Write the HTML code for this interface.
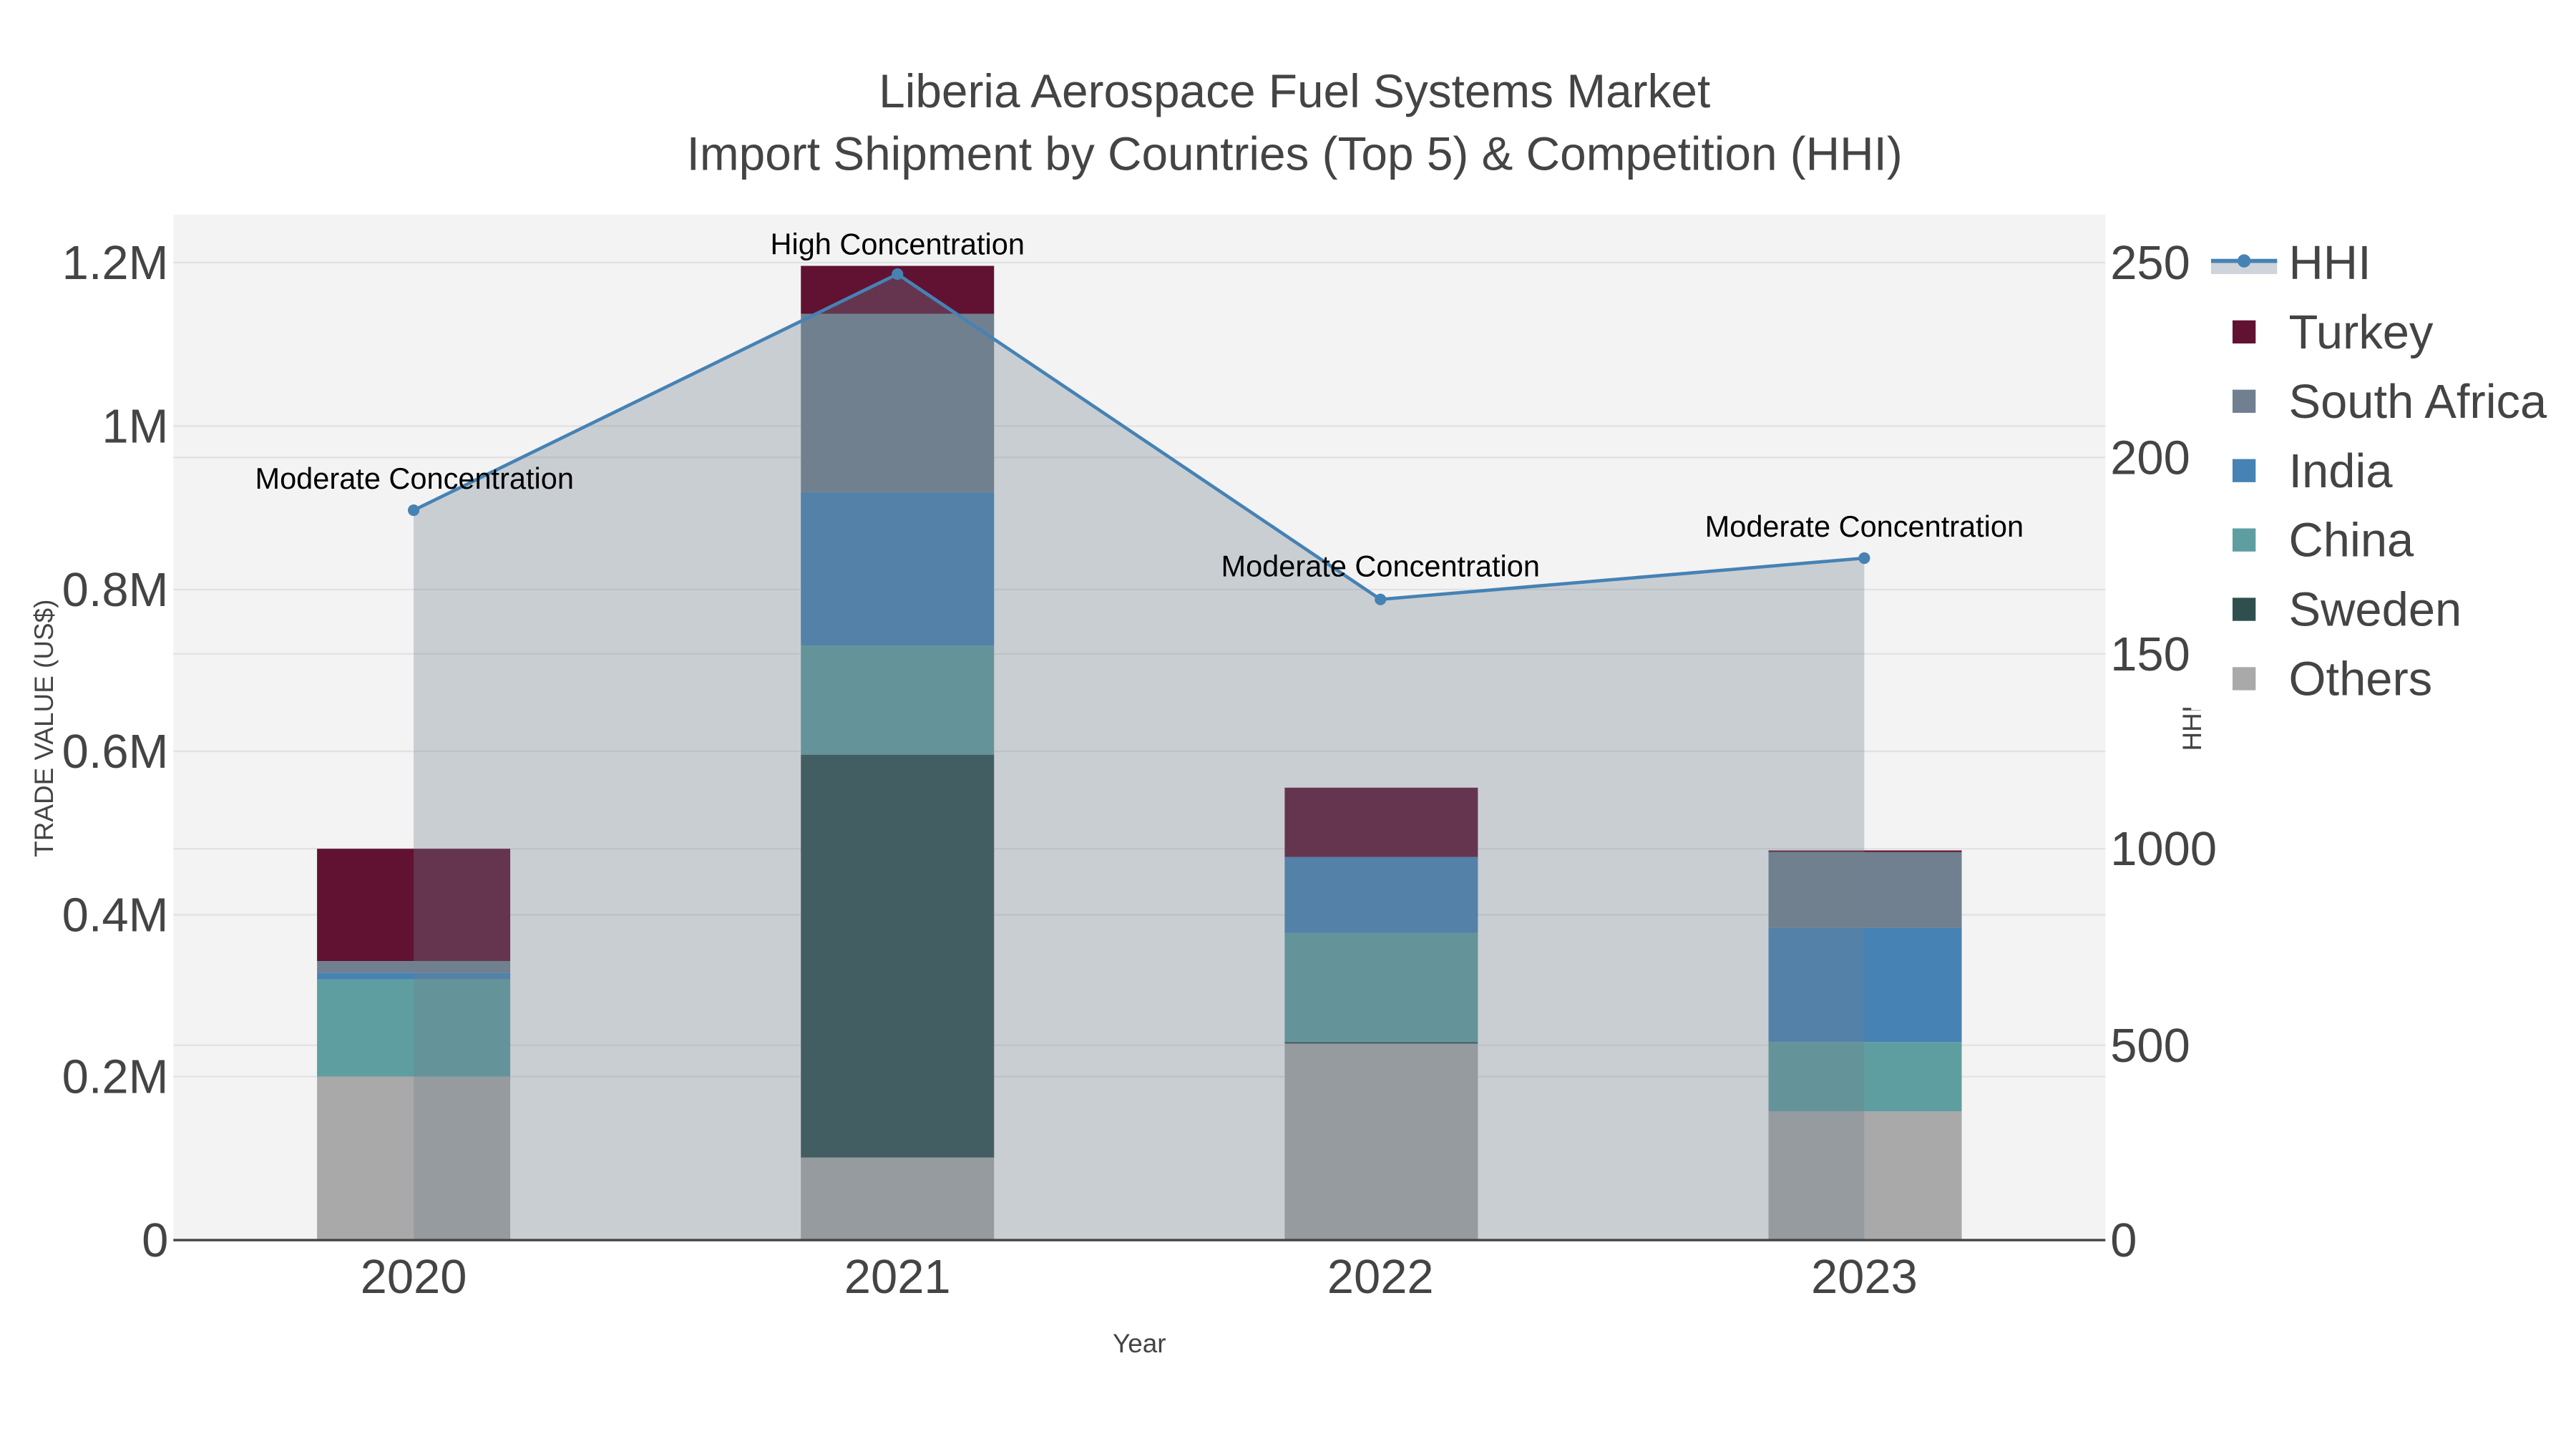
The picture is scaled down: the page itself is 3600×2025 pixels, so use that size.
<!DOCTYPE html>
<html><head><meta charset="utf-8"><style>
html,body{margin:0;padding:0;background:#fff;}
svg{display:block;font-family:"Liberation Sans",sans-serif;}
</style></head><body>
<svg width="3600" height="2025" viewBox="0 0 1560 877.5" xmlns="http://www.w3.org/2000/svg">
<rect x="0" y="0" width="1560" height="877.5" fill="#fff"/>
<rect x="105" y="130" width="1170" height="621" fill="#f3f3f3"/>
<g stroke="#e2e2e2" stroke-width="1">
<line x1="105" x2="1275" y1="159" y2="159"/><line x1="105" x2="1275" y1="258" y2="258"/>
<line x1="105" x2="1275" y1="357" y2="357"/><line x1="105" x2="1275" y1="455" y2="455"/>
<line x1="105" x2="1275" y1="554" y2="554"/><line x1="105" x2="1275" y1="652" y2="652"/>
<line x1="105" x2="1275" y1="277" y2="277"/><line x1="105" x2="1275" y1="396" y2="396"/>
<line x1="105" x2="1275" y1="514" y2="514"/><line x1="105" x2="1275" y1="633" y2="633"/>
</g>
<!-- 2020 -->
<rect x="192" y="652" width="117" height="99" fill="#a9a9a9"/>
<rect x="192" y="593" width="117" height="59" fill="#5f9ea0"/>
<rect x="192" y="589" width="117" height="4" fill="#4682b4"/>
<rect x="192" y="582" width="117" height="7" fill="#708090"/>
<rect x="192" y="514" width="117" height="68" fill="#611232"/>
<!-- 2021 -->
<rect x="485" y="701" width="117" height="50" fill="#a9a9a9"/>
<rect x="485" y="457" width="117" height="244" fill="#2f4f4f"/>
<rect x="485" y="391" width="117" height="66" fill="#5f9ea0"/>
<rect x="485" y="298" width="117" height="93" fill="#4682b4"/>
<rect x="485" y="190" width="117" height="108" fill="#708090"/>
<rect x="485" y="161" width="117" height="29" fill="#611232"/>
<!-- 2022 -->
<rect x="778" y="632" width="117" height="119" fill="#a9a9a9"/>
<rect x="778" y="631" width="117" height="1" fill="#2f4f4f"/>
<rect x="778" y="565" width="117" height="66" fill="#5f9ea0"/>
<rect x="778" y="519" width="117" height="46" fill="#4682b4"/>
<rect x="778" y="477" width="117" height="42" fill="#611232"/>
<!-- 2023 -->
<rect x="1071" y="673" width="117" height="78" fill="#a9a9a9"/>
<rect x="1071" y="631" width="117" height="42" fill="#5f9ea0"/>
<rect x="1071" y="562" width="117" height="69" fill="#4682b4"/>
<rect x="1071" y="516" width="117" height="46" fill="#708090"/>
<rect x="1071" y="515" width="117" height="1" fill="#611232"/>
<!-- HHI area -->
<polygon points="250.5,751 250.5,309 543.5,166 836,363 1129,338 1129,751" fill="rgba(112,128,144,0.32)"/>
<polyline points="250.5,309 543.5,166 836,363 1129,338" fill="none" stroke="#4682b4" stroke-width="2"/>
<g fill="#4682b4"><circle cx="250.5" cy="309" r="3.5"/><circle cx="543.5" cy="166" r="3.5"/><circle cx="836" cy="363" r="3.5"/><circle cx="1129" cy="338" r="3.5"/></g>
<line x1="105" x2="1275" y1="751" y2="751" stroke="#444" stroke-width="1.5"/>
<!-- annotations -->
<g font-size="18" fill="#000" text-anchor="middle">
<text x="251" y="296">Moderate Concentration</text>
<text x="543.5" y="154">High Concentration</text>
<text x="836" y="349">Moderate Concentration</text>
<text x="1129" y="325">Moderate Concentration</text>
</g>
<!-- title -->
<g fill="#444" font-size="28.5" text-anchor="middle">
<text x="784" y="65">Liberia Aerospace Fuel Systems Market</text>
<text x="784" y="103">Import Shipment by Countries (Top 5) &amp; Competition (HHI)</text>
</g>
<!-- left ticks -->
<g fill="#444" font-size="29" text-anchor="end">
<text x="102" y="169">1.2M</text><text x="102" y="268">1M</text><text x="102" y="367">0.8M</text>
<text x="102" y="465">0.6M</text><text x="102" y="564">0.4M</text><text x="102" y="662">0.2M</text><text x="102" y="761">0</text>
</g>
<!-- right ticks -->
<g fill="#444" font-size="29" text-anchor="start">
<text x="1278" y="169">2500</text><text x="1278" y="287">2000</text><text x="1278" y="406">1500</text>
<text x="1278" y="524">1000</text><text x="1278" y="643">500</text><text x="1278" y="761">0</text>
</g>
<!-- x ticks -->
<g fill="#444" font-size="29" text-anchor="middle">
<text x="250.5" y="783">2020</text><text x="543.5" y="783">2021</text><text x="836" y="783">2022</text><text x="1129" y="783">2023</text>
</g>
<text x="690" y="819" font-size="16" fill="#444" text-anchor="middle">Year</text>
<text transform="translate(32,441) rotate(-90)" font-size="16" fill="#444" text-anchor="middle">TRADE VALUE (US$)</text>
<text transform="translate(1333,441) rotate(-90)" font-size="16" fill="#444" text-anchor="middle">HHI</text>
<!-- legend -->
<rect x="1327" y="140" width="233" height="290" fill="#fff"/>
<rect x="1339" y="158" width="40" height="8" fill="#cfd4da"/>
<line x1="1339" x2="1379" y1="158" y2="158" stroke="#4682b4" stroke-width="2.5"/>
<circle cx="1359" cy="158" r="4" fill="#4682b4"/>
<rect x="1352" y="194" width="14" height="14" fill="#611232"/>
<rect x="1352" y="236" width="14" height="14" fill="#708090"/>
<rect x="1352" y="278" width="14" height="14" fill="#4682b4"/>
<rect x="1352" y="320" width="14" height="14" fill="#5f9ea0"/>
<rect x="1352" y="362" width="14" height="14" fill="#2f4f4f"/>
<rect x="1352" y="404" width="14" height="14" fill="#a9a9a9"/>
<g fill="#444" font-size="29">
<text x="1386" y="169">HHI</text><text x="1386" y="211">Turkey</text><text x="1386" y="253">South Africa</text>
<text x="1386" y="295">India</text><text x="1386" y="337">China</text><text x="1386" y="379">Sweden</text><text x="1386" y="421">Others</text>
</g>
</svg>
</body></html>
